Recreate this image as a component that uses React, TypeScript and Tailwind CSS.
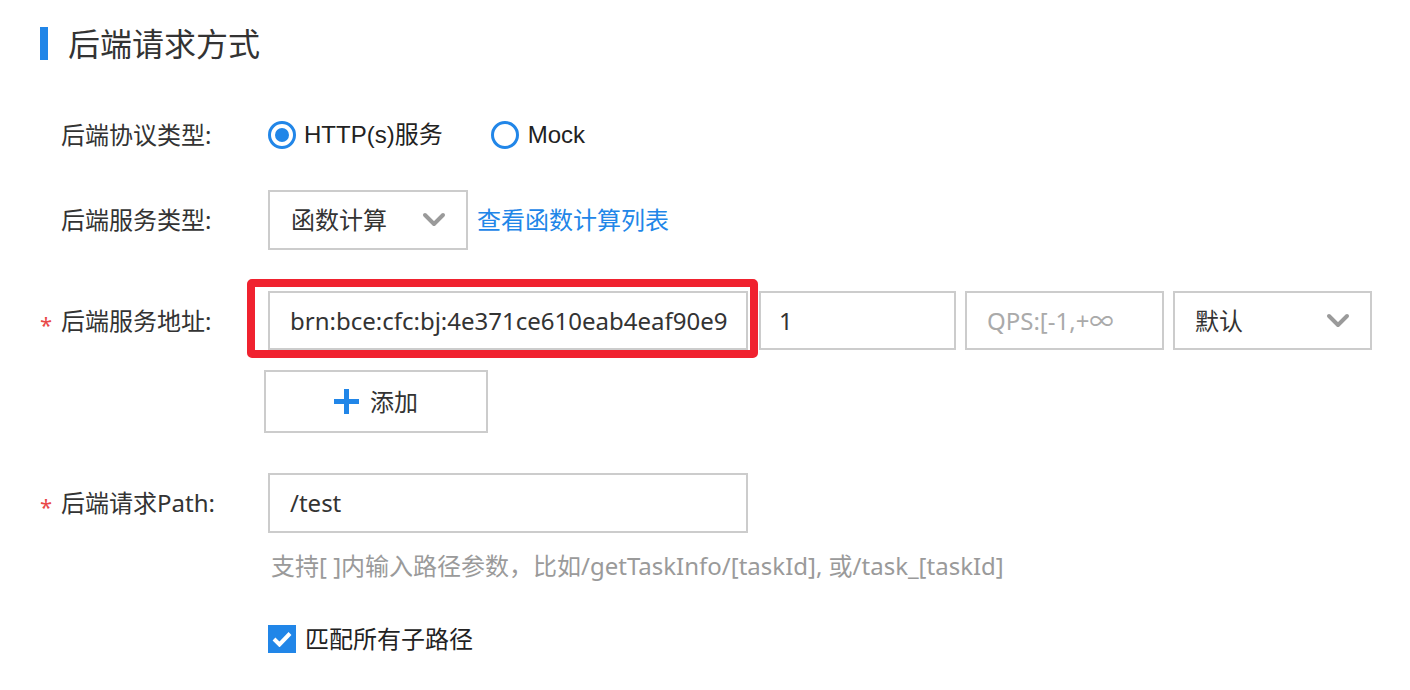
import React from "react";

const font = { fontFamily: '"Noto Sans", "Noto Sans CJK SC", sans-serif' };

function Chevron() {
  return (
    <svg width="24" height="16" viewBox="0 0 24 16" className="shrink-0">
      <polyline points="3,3 12,12 21,3" fill="none" stroke="#9a9a9a" strokeWidth="4" strokeLinecap="round" strokeLinejoin="round" />
    </svg>
  );
}

function Label({ text, required }: { text: string; required?: boolean }) {
  return (
    <div className="w-[228px] shrink-0 flex items-center text-[24px] text-[#333]">
      <span className="w-[21px] text-[#e94848] text-[22px] leading-none pt-[6px]">{required ? "*" : ""}</span>
      <span>{text}</span>
    </div>
  );
}

export default function App() {
  return (
    <div className="w-[1410px] h-[690px] bg-white pl-[40px] pt-[27px] text-[#333]" style={font}>
      <div className="flex items-center h-[33px]">
        <div className="w-[8px] h-[33px] bg-[#2186e8]" />
        <div className="ml-[20px] text-[32px] leading-none text-[#333]">后端请求方式</div>
      </div>

      <div className="flex items-center mt-[61px] h-[28px]">
        <Label text="后端协议类型:" />
        <div className="flex items-center text-[24px] text-[#222]">
          <span className="w-[28px] h-[28px] rounded-full border-[3px] border-[#2186e8] flex items-center justify-center">
            <span className="w-[14px] h-[14px] rounded-full bg-[#2186e8]" />
          </span>
          <span className="ml-[8px]" style={{ fontFamily: '"Liberation Sans", "Noto Sans CJK SC", sans-serif' }}>HTTP(s)服务</span>
          <span className="ml-[48px] w-[28px] h-[28px] rounded-full border-[3px] border-[#2186e8]" />
          <span className="ml-[9px]" style={{ fontFamily: '"Liberation Sans", "Noto Sans CJK SC", sans-serif' }}>Mock</span>
        </div>
      </div>

      <div className="flex items-center mt-[41px]">
        <Label text="后端服务类型:" />
        <div className="w-[200px] h-[60px] border-2 border-[#cccccc] flex items-center justify-between pl-[21px] pr-[20px] text-[24px] text-[#333]">
          <span>函数计算</span>
          <Chevron />
        </div>
        <a className="ml-[9px] text-[24px] text-[#2186e8]">查看函数计算列表</a>
      </div>

      <div className="flex items-center mt-[41px]">
        <Label text="后端服务地址:" required />
        <div className="relative">
          <div className="w-[480px] h-[59px] border-2 border-[#cccccc] flex items-center pl-[20px] text-[24px] text-[#333] whitespace-nowrap">
            <span>brn:bce:cfc:bj:4e371ce610eab4eaf90e9</span>
          </div>
          <span className="absolute -left-[21px] -top-[12px] -right-[10px] -bottom-[8px] border-[8px] border-[#f0222f] rounded-[5px] pointer-events-none" />
        </div>
        <div className="ml-[11px] w-[197px] h-[59px] border-2 border-[#cccccc] flex items-center pl-[18px] text-[24px] text-[#333]">1</div>
        <div className="ml-[9px] w-[199px] h-[59px] border-2 border-[#cccccc] flex items-center pl-[20px] text-[24px] text-[#aaaaaa] whitespace-nowrap">QPS:[-1,+∞</div>
        <div className="ml-[9px] w-[199px] h-[59px] border-2 border-[#cccccc] flex items-center justify-between pl-[20px] pr-[20px] text-[24px] text-[#333]">
          <span>默认</span>
          <Chevron />
        </div>
      </div>

      <div className="flex mt-[20px] pl-[224px]">
        <div className="w-[224px] h-[63px] border-2 border-[#cccccc] flex items-center justify-center text-[24px] text-[#333]">
          <svg width="25" height="25" viewBox="0 0 25 25" className="mr-[11px]">
            <rect x="10" y="0" width="5" height="25" fill="#2186e8" />
            <rect x="0" y="10" width="25" height="5" fill="#2186e8" />
          </svg>
          <span>添加</span>
        </div>
      </div>

      <div className="flex items-center mt-[40px]">
        <Label text="后端请求Path:" required />
        <div className="w-[480px] h-[60px] border-2 border-[#cccccc] flex items-center pl-[20px] text-[24px] text-[#333]">/test</div>
      </div>

      <div className="pl-[231px] mt-[17px] text-[24px] text-[#9a9a9a] leading-[32px] whitespace-nowrap">
        支持[ ]内输入路径参数，比如/getTaskInfo/[taskId], 或/task_[taskId]
      </div>

      <div className="flex items-center pl-[228px] mt-[39px]">
        <span className="w-[28px] h-[28px] bg-[#2186e8] flex items-center justify-center">
          <svg width="20" height="16" viewBox="0 0 20 16">
            <polyline points="2,8 7.5,13.5 18,2.5" fill="none" stroke="#fff" strokeWidth="4" strokeLinejoin="miter" />
          </svg>
        </span>
        <span className="ml-[9px] text-[24px] text-[#222]">匹配所有子路径</span>
      </div>
    </div>
  );
}
